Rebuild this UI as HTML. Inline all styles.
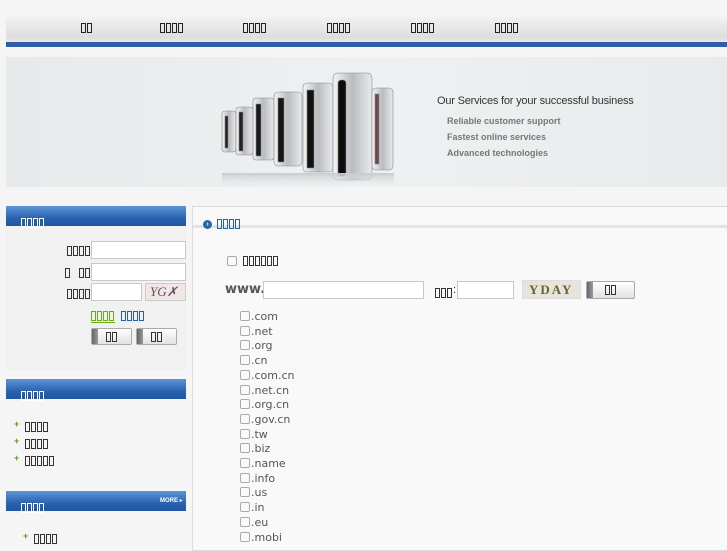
<!DOCTYPE html>
<html><head><meta charset="utf-8"><style>
*{margin:0;padding:0;box-sizing:border-box}
body{width:727px;height:545px;overflow:hidden;background:#f5f5f5;font-family:"Liberation Sans","DejaVu Sans",sans-serif;position:relative}
.a{position:absolute}
i{display:inline-block;width:5px;height:10px;border:1px solid currentColor;margin-right:1px;vertical-align:middle}
.nav{left:6px;top:17px;width:721px;height:25px;background:linear-gradient(#f2f2f2,#dedede 80%,#e8e8e8)}
.stripe{left:6px;top:42px;width:721px;height:5px;background:#2f5ea6}
.ni{top:23px;color:#222;font-size:0}
.banner{left:6px;top:57px;width:721px;height:130px;background:linear-gradient(90deg,#e6eaeb,#eef1f2 50%,#e8ebec)}
.hd{left:6px;width:180px;height:20px;background:linear-gradient(#5d95d6,#2a63b0 60%,#1f56a2);color:#fff;font-size:0}
.hd span{position:absolute;left:15px;top:12px}
.pan{left:6px;width:180px;background:#f1f1f1}
.lbl{color:#333;font-size:0}
.inp{background:#fff;border:1px solid #c8c8c8}
.btn{border:1px solid #aaa;border-radius:2px;background:linear-gradient(#fff,#e2e2e2);color:#333;font-size:0;text-align:center;padding-top:3px}
.btn:before{content:"";position:absolute;left:0;top:0;width:6px;height:100%;background:linear-gradient(90deg,#666,#999)}
.li{color:#333;font-size:0}
.plus{color:#5aa020;font-size:9px;font-weight:bold;margin-right:6px}
.cb{width:10px;height:10px;border:1px solid #aaa;background:#fafafa;border-radius:2px}
.tld{left:240px;font-size:11px;color:#555;font-family:"DejaVu Sans",sans-serif}
.tld b{display:inline-block;width:10px;height:10px;border:1px solid #aaa;border-radius:2px;vertical-align:-1px;margin-right:1px;background:#fafafa}
</style></head><body>
<div class="a nav"></div><div class="a stripe"></div>
<div class="a ni" style="left:81px"><i></i><i></i></div>
<div class="a ni" style="left:160px"><i></i><i></i><i></i><i></i></div>
<div class="a ni" style="left:243px"><i></i><i></i><i></i><i></i></div>
<div class="a ni" style="left:327px"><i></i><i></i><i></i><i></i></div>
<div class="a ni" style="left:411px"><i></i><i></i><i></i><i></i></div>
<div class="a ni" style="left:495px"><i></i><i></i><i></i><i></i></div>

<div class="a banner"></div>
<svg class="a" style="left:210px;top:68px" width="190" height="120">
<defs><linearGradient id="s" x1="0" x2="1"><stop offset="0" stop-color="#f4f4f4"/><stop offset=".5" stop-color="#b9bcc0"/><stop offset="1" stop-color="#e9eaec"/></linearGradient>
<linearGradient id="r" x1="0" y1="0" x2="0" y2="1"><stop offset="0" stop-color="#c8cbce"/><stop offset="1" stop-color="#eef0f1" stop-opacity="0"/></linearGradient></defs>
<g stroke="#888" stroke-width=".6">
<rect x="12" y="43" width="14" height="41" rx="3" fill="url(#s)"/><rect x="15" y="48" width="3" height="32" fill="#222"/>
<rect x="26" y="39" width="17" height="48" rx="3" fill="url(#s)"/><rect x="29" y="44" width="4" height="39" fill="#222"/>
<rect x="43" y="30" width="21" height="62" rx="3" fill="url(#s)"/><rect x="46" y="36" width="5" height="52" fill="#1a1a1a"/>
<rect x="64" y="24" width="28" height="74" rx="4" fill="url(#s)"/><rect x="68" y="30" width="6" height="64" fill="#161616"/>
<rect x="93" y="15" width="30" height="89" rx="4" fill="url(#s)"/><rect x="97" y="22" width="7" height="78" fill="#111"/>
<rect x="123" y="5" width="39" height="107" rx="5" fill="url(#s)"/><rect x="128" y="12" width="8" height="96" rx="3" fill="#0d0d0d"/>
<rect x="162" y="20" width="21" height="82" rx="4" fill="url(#s)"/><rect x="165" y="26" width="4" height="70" fill="#6a4a50"/>
</g>
<rect x="12" y="105" width="172" height="15" fill="url(#r)"/>
</svg>
<div class="a" style="left:437px;top:95px;font-size:11px;color:#333;letter-spacing:-.2px">Our Services for your successful business</div>
<div class="a" style="left:447px;top:113px;font-size:9px;font-weight:bold;color:#777;line-height:16px">Reliable customer support<br>Fastest online services<br>Advanced technologies</div>

<!-- left column -->
<div class="a pan" style="top:226px;height:144px"></div>
<div class="a hd" style="top:206px"><span><i></i><i></i><i></i><i></i></span></div>
<div class="a lbl" style="left:67px;top:246px"><i></i><i></i><i></i><i></i></div>
<div class="a inp" style="left:91px;top:241px;width:95px;height:18px"></div>
<div class="a lbl" style="left:65px;top:268px"><i></i><i style="margin-left:8px"></i><i></i></div>
<div class="a inp" style="left:91px;top:263px;width:95px;height:18px"></div>
<div class="a lbl" style="left:67px;top:289px"><i></i><i></i><i></i><i></i></div>
<div class="a inp" style="left:91px;top:283px;width:51px;height:18px"></div>
<div class="a" style="left:145px;top:283px;width:41px;height:18px;background:#f2e6e4;border:1px solid #ccc;color:#556;font-size:13px;font-family:'Liberation Serif',serif;font-style:italic;padding-left:4px;line-height:16px;overflow:hidden">YG✗</div>
<div class="a" style="left:91px;top:311px;font-size:0;color:#6aa81c;border-bottom:1px solid #6aa81c;padding-bottom:1px"><i></i><i></i><i></i><i></i></div>
<div class="a" style="left:121px;top:311px;font-size:0;color:#2b5fa8"><i></i><i></i><i></i><i></i></div>
<div class="a btn" style="left:91px;top:328px;width:41px;height:17px"><i></i><i></i></div>
<div class="a btn" style="left:136px;top:328px;width:41px;height:17px"><i></i><i></i></div>

<div class="a hd" style="top:379px"><span><i></i><i></i><i></i><i></i></span></div>
<div class="a li" style="left:14px;top:419px"><span class="plus">+</span><i></i><i></i><i></i><i></i></div>
<div class="a li" style="left:14px;top:436px"><span class="plus">+</span><i></i><i></i><i></i><i></i></div>
<div class="a li" style="left:14px;top:453px"><span class="plus">+</span><i></i><i></i><i></i><i></i><i></i></div>

<div class="a hd" style="top:491px"><span><i></i><i></i><i></i><i></i></span><b style="position:absolute;left:154px;top:6px;font-size:6px;color:#fff">MORE ▸</b></div>
<div class="a li" style="left:23px;top:531px"><span class="plus">+</span><i></i><i></i><i></i><i></i></div>

<!-- right panel -->
<div class="a" style="left:192px;top:206px;width:540px;height:345px;border:1px solid #dcdcdc;background:#f9f9f9"></div>
<div class="a" style="left:193px;top:225px;width:534px;height:3px;background:#e3e3e3"></div>
<div class="a" style="left:203px;top:220px;width:9px;height:9px;border-radius:50%;background:#2a63b0;color:#fff;font-size:7px;line-height:9px;text-align:center;font-weight:bold">›</div>
<div class="a" style="left:217px;top:219px;font-size:0;color:#2a5fa8"><i></i><i></i><i></i><i></i></div>

<div class="a cb" style="left:227px;top:256px"></div>
<div class="a" style="left:243px;top:256px;font-size:0;color:#333"><i></i><i></i><i></i><i></i><i></i><i></i></div>
<div class="a" style="left:225px;top:282px;font-size:13px;font-weight:bold;color:#555;font-family:'DejaVu Sans',sans-serif">www.</div>
<div class="a inp" style="left:263px;top:281px;width:161px;height:18px"></div>
<div class="a" style="left:435px;top:284px;font-size:11px;color:#333"><span style="font-size:0"><i></i><i></i><i></i></span>:</div>
<div class="a inp" style="left:457px;top:281px;width:57px;height:18px"></div>
<div class="a" style="left:522px;top:280px;width:59px;height:19px;background:#e9e3dc;border:1px solid #ddd;color:#5a6a2a;font-size:13px;font-weight:bold;font-family:'Liberation Serif',serif;padding-left:6px;letter-spacing:2px;line-height:18px">YDAY</div>
<div class="a btn" style="left:586px;top:281px;width:49px;height:18px;padding-top:3px"><i></i><i></i></div>

<div class="a tld" style="top:310px;line-height:14.7px"><b></b>.com<br><b></b>.net<br><b></b>.org<br><b></b>.cn<br><b></b>.com.cn<br><b></b>.net.cn<br><b></b>.org.cn<br><b></b>.gov.cn<br><b></b>.tw<br><b></b>.biz<br><b></b>.name<br><b></b>.info<br><b></b>.us<br><b></b>.in<br><b></b>.eu<br><b></b>.mobi</div>
</body></html>
